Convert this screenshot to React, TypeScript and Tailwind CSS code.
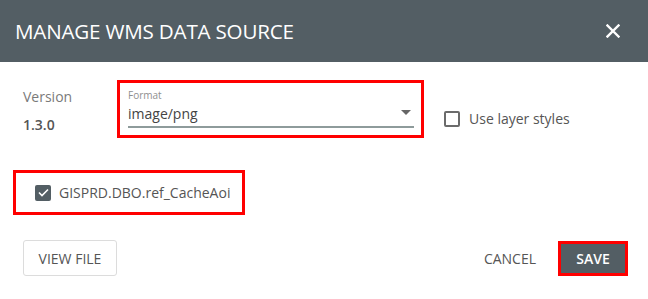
import React from "react";

export default function App() {
  const font = { fontFamily: '"Open Sans", "Liberation Sans", sans-serif' };
  return (
    <div className="w-[648px] h-[299px] bg-white overflow-hidden" style={font}>
      <div className="h-[62px] bg-[#535e64] flex items-center justify-between pl-[15px] pr-[28px]">
        <div className="text-white text-[20.6px] tracking-[-0.2px]">MANAGE WMS DATA SOURCE</div>
        <svg width="14" height="14" viewBox="0 0 14 14">
          <path d="M1.5 1.5 L12.5 12.5 M12.5 1.5 L1.5 12.5" stroke="white" strokeWidth="2.4" strokeLinecap="square" />
        </svg>
      </div>

      <div className="flex items-start pl-[23px] pt-[18px]">
        <div className="w-[94px] pt-[7px]">
          <div className="text-[14px] leading-[20px] text-[#7a7a7a]">Version</div>
          <div className="text-[14px] leading-[20px] mt-[8px] font-semibold text-[#555]">1.3.0</div>
        </div>
        <div className="w-[307px] h-[58px] border-[3px] border-[#ff0000] pl-[8px] pr-[7px] pt-[6px]">
          <div className="text-[10px] leading-[12px] text-[#8f8f8f]">Format</div>
          <div className="flex items-center justify-between border-b-2 border-[#8e9b9b] h-[27px]">
            <span className="text-[14px] text-[#444] leading-[20px]">image/png</span>
            <svg width="10" height="5" viewBox="0 0 10 5" className="mr-[3px] mb-[2px]">
              <path d="M0 0 L10 0 L5 5 Z" fill="#666" />
            </svg>
          </div>
        </div>
        <div className="flex items-center ml-[20px] mt-[28px]">
          <div className="w-[16px] h-[16px] border-2 border-[#6b6b6b] rounded-[2px]" />
          <span className="ml-[9px] text-[14px] text-[#555]">Use layer styles</span>
        </div>
      </div>

      <div className="pl-[13px] mt-[32px]">
        <div className="w-[232px] h-[45px] border-[3px] border-[#ff0000] flex items-center pl-[19px]">
          <div className="w-[16px] h-[16px] bg-[#535e64] rounded-[2px] flex items-center justify-center">
            <svg width="11" height="9" viewBox="0 0 11 9">
              <path d="M1 4.5 L4 7.5 L10 1.5" stroke="white" strokeWidth="1.6" fill="none" />
            </svg>
          </div>
          <span className="ml-[8px] text-[14px] text-[#555]">GISPRD.DBO.ref_CacheAoi</span>
        </div>
      </div>

      <div className="flex items-center justify-between pl-[23px] pr-[20px] mt-[25px]">
        <div className="w-[94px] h-[36px] border border-[#dcdcdc] rounded-[3px] flex items-center justify-center text-[14px] text-[#555]">
          VIEW FILE
        </div>
        <div className="flex items-center">
          <span className="text-[14px] text-[#555] mr-[22px]">CANCEL</span>
          <div className="w-[70px] h-[35px] border-[3px] border-[#ff0000] bg-[#535e64] flex items-center justify-center text-[14px] font-semibold text-white">
            SAVE
          </div>
        </div>
      </div>
    </div>
  );
}
